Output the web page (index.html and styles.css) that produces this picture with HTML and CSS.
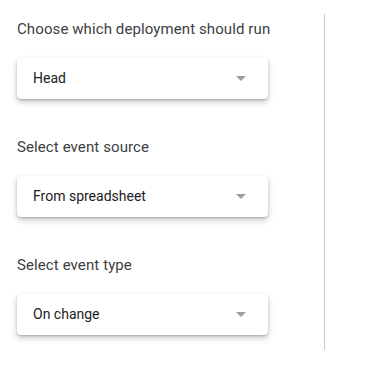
FILE: index.html
```html
<!DOCTYPE html>
<html>
<head>
<meta charset="utf-8">
<link rel="stylesheet" href="styles.css">
</head>
<body>
<div class="panel">
  <div class="field">
    <div class="label">Choose which deployment should run</div>
    <div class="select"><span class="value">Head</span><span class="arrow"></span></div>
  </div>
  <div class="field">
    <div class="label">Select event source</div>
    <div class="select"><span class="value">From spreadsheet</span><span class="arrow"></span></div>
  </div>
  <div class="field">
    <div class="label">Select event type</div>
    <div class="select"><span class="value">On change</span><span class="arrow"></span></div>
  </div>
</div>
</body>
</html>
```
FILE: styles.css
```css
html, body {
  margin: 0;
  padding: 0;
  background: #fff;
}
body {
  font-family: Roboto, "Noto Sans", sans-serif;
}
.panel {
  margin-top: 14px;
  width: 307px;
  padding: 5px 0 15px 17px;
  border-right: 1px solid #c6c9cc;
  display: flex;
  flex-direction: column;
  gap: 38px;
}
.field {
  display: flex;
  flex-direction: column;
  gap: 19px;
}
.label {
  font-size: 15px;
  line-height: 20px;
  letter-spacing: 0.1px;
  color: #3c4043;
}
.select {
  width: 251px;
  height: 41px;
  box-sizing: border-box;
  border-radius: 4px;
  background: #fff;
  box-shadow: 0 1px 2px rgba(0,0,0,.2), 0 3px 6px rgba(0,0,0,.22);
  display: flex;
  align-items: center;
  justify-content: space-between;
  padding: 0 22px 0 16px;
}
.value {
  font-size: 14px;
  line-height: 41px;
  color: #202124;
}
.arrow {
  width: 0;
  height: 0;
  border-left: 5px solid transparent;
  border-right: 5px solid transparent;
  border-top: 5px solid #9e9e9e;
}
```
